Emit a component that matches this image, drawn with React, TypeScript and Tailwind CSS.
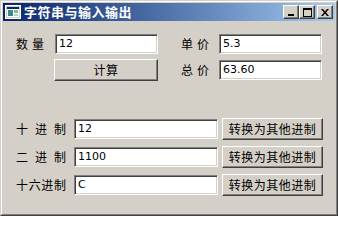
const cjk = "font-['Noto_Sans_CJK_SC','Noto_Sans',sans-serif]";

/** Spread characters evenly across a fixed width, like padded Win32 labels. */
function Label({ text, width }: { text: string; width: string }) {
  return (
    <div className={`flex justify-between text-[12px] leading-none text-black ${cjk} ${width}`}>
      {text.split("").map((c, i) => (
        <span key={i}>{c}</span>
      ))}
    </div>
  );
}

function Field({ value, width }: { value: string; width: string }) {
  return (
    <div
      className={`h-[20px] ${width} bg-white border border-t-[#808080] border-l-[#808080] border-b-white border-r-white shadow-[inset_1px_1px_#404040,inset_-1px_-1px_#d4d0c8] flex items-center pl-[3px] font-['DejaVu_Sans',sans-serif] text-[11px] text-black`}
    >
      {value}
    </div>
  );
}

function Button({ label, width }: { label: string; width: string }) {
  return (
    <div
      className={`h-[22px] ${width} bg-[#d4d0c8] border border-t-white border-l-white border-b-[#404040] border-r-[#404040] shadow-[inset_-1px_-1px_#808080] flex items-center justify-center text-[12px] tracking-[0.5px] text-black ${cjk}`}
    >
      {label}
    </div>
  );
}

function CaptionButton({ children }: { children: React.ReactNode }) {
  return (
    <div className="w-[16px] h-[14px] bg-[#d4d0c8] border border-t-white border-l-white border-b-[#404040] border-r-[#404040] shadow-[inset_-1px_-1px_#808080] flex items-center justify-center">
      {children}
    </div>
  );
}

export default function App() {
  const radixRows = [
    { label: "十进制", value: "12" },
    { label: "二进制", value: "1100" },
    { label: "十六进制", value: "C" },
  ];

  return (
    <div className="w-[338px] h-[216px] bg-[#d4d0c8] border border-t-[#d4d0c8] border-l-[#d4d0c8] border-b-[#404040] border-r-[#404040]">
      <div className="h-full border border-t-white border-l-white border-b-[#808080] border-r-[#808080] p-[1px] flex flex-col">
        {/* Title bar */}
        <div className="h-[18px] flex items-center bg-gradient-to-r from-[#0a246a] to-[#a6caf0] pl-[2px] pr-[2px]">
          <svg width="16" height="14" viewBox="0 0 16 14">
            <rect x="0.5" y="0.5" width="15" height="13" fill="#d4d0c8" stroke="#ffffff" />
            <rect x="2" y="2" width="12" height="10" fill="#ffffff" />
            <rect x="2" y="2" width="12" height="2" fill="#0a246a" />
            <rect x="3" y="5" width="5" height="6" fill="#3a8a8a" />
            <rect x="9" y="5" width="4" height="3" fill="#7fbf6f" />
            <rect x="9" y="9" width="4" height="2" fill="#a6caf0" />
          </svg>
          <span className={`ml-[3px] text-[13px] font-bold tracking-[0.5px] text-white ${cjk}`}>
            字符串与输入输出
          </span>
          <div className="ml-auto flex items-center">
            <CaptionButton>
              <svg width="8" height="7" viewBox="0 0 8 7">
                <rect x="1" y="5" width="6" height="2" fill="#000" />
              </svg>
            </CaptionButton>
            <CaptionButton>
              <svg width="9" height="9" viewBox="0 0 9 9">
                <rect x="0.5" y="0.5" width="8" height="8" fill="none" stroke="#000" />
                <rect x="0" y="0" width="9" height="2" fill="#000" />
              </svg>
            </CaptionButton>
            <div className="w-[2px]" />
            <CaptionButton>
              <svg width="8" height="7" viewBox="0 0 8 7">
                <path d="M0 0h2l2 2.5L6 0h2L5 3.5 8 7H6L4 4.5 2 7H0l3-3.5z" fill="#000" />
              </svg>
            </CaptionButton>
          </div>
        </div>

        {/* Client area */}
        <div className="flex-1 pl-[13px] pt-[13px]">
          <div className="flex items-center h-[20px]">
            <Label text="数量" width="w-[28px]" />
            <div className="w-[11px]" />
            <Field value="12" width="w-[103px]" />
            <div className="w-[23px]" />
            <Label text="单价" width="w-[28px]" />
            <div className="w-[10px]" />
            <Field value="5.3" width="w-[103px]" />
          </div>

          <div className="flex items-center h-[22px] mt-[5px]">
            <div className="w-[38px]" />
            <Button label="计算" width="w-[104px]" />
            <div className="w-[23px]" />
            <Label text="总价" width="w-[28px]" />
            <div className="w-[10px]" />
            <Field value="63.60" width="w-[103px]" />
          </div>

          <div className="flex flex-col gap-[6px] mt-[37px]">
            {radixRows.map((row) => (
              <div key={row.label} className="flex items-center h-[22px]">
                <Label text={row.label} width="w-[50px]" />
                <div className="w-[8px]" />
                <Field value={row.value} width="w-[144px]" />
                <div className="w-[4px]" />
                <Button label="转换为其他进制" width="w-[101px]" />
              </div>
            ))}
          </div>
        </div>
      </div>
    </div>
  );
}
